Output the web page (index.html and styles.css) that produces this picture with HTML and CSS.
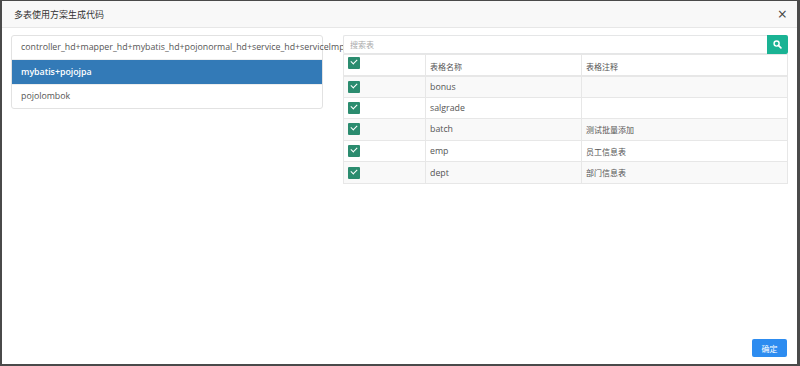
FILE: index.html
```html
<!DOCTYPE html>
<html>

<head>
  <meta name="viewport" content="width=device-width, initial-scale=1">
  <link rel="stylesheet" href="styles.css">
</head>

<body>
  <div class="modal">
    <div class="modal-header">
      <span class="modal-title">多表使用方案生成代码</span>
      <span class="close">&times;</span>
    </div>

    <div class="modal-body">
      <!-- schemes -->
      <ul class="scheme-list">
        <li>controller_hd+mapper_hd+mybatis_hd+pojonormal_hd+service_hd+serviceImpl_hd</li>
        <li class="active">mybatis+pojojpa</li>
        <li>pojolombok</li>
      </ul>

      <!-- tables -->
      <div class="table-side">
        <div class="search">
          <input type="text" placeholder="搜索表">
          <button class="search-btn">
            <svg width="9" height="9" viewBox="0 0 10 10">
              <circle cx="4" cy="4" r="2.8" fill="none" stroke="#fff" stroke-width="1.6" />
              <line x1="6" y1="6" x2="8.8" y2="8.8" stroke="#fff" stroke-width="1.8" stroke-linecap="round" />
            </svg>
          </button>
        </div>

        <table class="tables">
          <thead>
            <tr>
              <th class="col-check"><span class="check"></span></th>
              <th class="col-name">表格名称</th>
              <th>表格注释</th>
            </tr>
          </thead>
          <tbody>
            <tr><td><span class="check"></span></td><td>bonus</td><td></td></tr>
            <tr><td><span class="check"></span></td><td>salgrade</td><td></td></tr>
            <tr><td><span class="check"></span></td><td>batch</td><td>测试批量添加</td></tr>
            <tr><td><span class="check"></span></td><td>emp</td><td>员工信息表</td></tr>
            <tr><td><span class="check"></span></td><td>dept</td><td>部门信息表</td></tr>
          </tbody>
        </table>
      </div>
    </div>

    <div class="modal-footer">
      <button class="btn-ok">确定</button>
    </div>
  </div>
</body>

</html>
```

FILE: styles.css
```css
html,
body {
  margin: 0;
  height: 100%;
}

body {
  font-family: "Open Sans", "Noto Sans CJK SC", sans-serif;
  font-size: 8.8px;
  color: #555;
  background: #fff;
}

.modal {
  box-sizing: border-box;
  height: 366px;
  border-style: solid;
  border-color: #4a4a4a;
  border-width: 1px 3px 2px 2px;
  display: flex;
  flex-direction: column;
  background: #fff;
}

.modal-header {
  height: 26px;
  background: #f8f8f8;
  border-bottom: 1px solid #e7e7e7;
  display: flex;
  align-items: center;
  justify-content: space-between;
  padding: 0 10px 0 12px;
}

.modal-title {
  font-size: 9px;
  color: #333;
}

.close {
  font-size: 16px;
  color: #444;
  line-height: 1;
}

.modal-body {
  flex: 1;
  display: flex;
  gap: 20px;
  padding: 7px 9px 0 9px;
  align-items: flex-start;
}

.scheme-list {
  width: 312px;
  box-sizing: border-box;
  margin: 0;
  padding: 0;
  list-style: none;
  border: 1px solid #e2e2e2;
  border-radius: 3px;
}

.scheme-list li {
  height: 23px;
  line-height: 23px;
  padding: 0 9px;
  white-space: nowrap;
  color: #555;
}

.scheme-list li + li {
  border-top: 1px solid #eee;
}

.scheme-list li.active {
  background: #337ab7;
  color: #fff;
  font-weight: 600;
  height: 24px;
  line-height: 24px;
}

.table-side {
  width: 445px;
  position: relative;
  z-index: 1;
}

.search {
  display: flex;
  height: 19px;
  background: #fff;
}

.search input {
  flex: 1;
  box-sizing: border-box;
  height: 19px;
  border: 1px solid #e5e6e7;
  border-right: 0;
  border-radius: 2px 0 0 2px;
  padding: 0 6px;
  font-family: "Open Sans", "Noto Sans CJK SC", sans-serif;
  font-size: 8px;
  outline: none;
}

.search input::placeholder {
  color: #aaa;
}

.search-btn {
  width: 21px;
  height: 19px;
  border: 0;
  border-radius: 0 2px 2px 0;
  background: #1ab394;
  padding: 0;
  display: flex;
  align-items: center;
  justify-content: center;
}

.tables {
  width: 100%;
  border-collapse: collapse;
  border: 1px solid #e7e7e7;
}

.tables th,
.tables td {
  box-sizing: border-box;
  border: 1px solid #e7e7e7;
  height: 21.6px;
  padding: 0 4px;
  text-align: left;
  font-weight: normal;
  color: #555;
  vertical-align: middle;
}

.tables th {
  height: 21px;
  font-size: 8px;
  border-bottom-width: 2px;
  padding-top: 4px;
}

.tables td:nth-child(3) {
  font-size: 8px;
}

.tables tbody tr:nth-child(odd) {
  background: #f9f9f9;
}

.col-check {
  width: 82px;
}

.col-name {
  width: 156px;
}

.tables th.col-check {
  vertical-align: top;
  padding-top: 2px;
}

.check {
  display: block;
  width: 12px;
  height: 12px;
  border-radius: 1px;
  background: #2b8c6f;
  position: relative;
}

.check::after {
  content: "";
  position: absolute;
  left: 3px;
  top: 2px;
  width: 5px;
  height: 3px;
  border-left: 1.5px solid #fff;
  border-bottom: 1.5px solid #fff;
  transform: rotate(-45deg);
}

.modal-footer {
  display: flex;
  justify-content: flex-end;
  padding: 0 10px 7px 0;
}

.btn-ok {
  width: 35px;
  height: 18px;
  border: 0;
  border-radius: 2px;
  background: #2d8cf0;
  color: #fff;
  font-family: "Open Sans", "Noto Sans CJK SC", sans-serif;
  font-size: 8px;
  padding: 0;
}
```
